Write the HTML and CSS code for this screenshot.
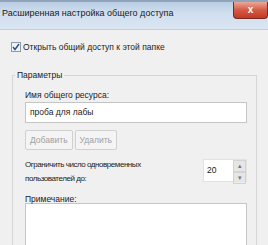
FILE: index.html
```html
<!DOCTYPE html>
<html lang="ru">
<head>
    <meta charset="UTF-8">
    <title>Расширенная настройка общего доступа</title>
    <link rel="stylesheet" href="styles.css">
</head>
<body>
    <div class="window">
        <div class="titlebar">
            <span class="title">Расширенная настройка общего доступа</span>
            <span class="close">x</span>
        </div>
        <div class="content">
            <label class="share">
                <span class="check">
                    <svg width="8" height="8" viewBox="0 0 8 8"><path d="M1 4 L3 6.5 L7 1" fill="none" stroke="#2d4f8a" stroke-width="1.4"/></svg>
                </span>
                Открыть общий доступ к этой папке
            </label>
            <fieldset class="params">
                <legend>Параметры</legend>
                <div class="field-label">Имя общего ресурса:</div>
                <div class="textbox">проба для лабы</div>
                <div class="buttons">
                    <span class="btn">Добавить</span>
                    <span class="btn">Удалить</span>
                </div>
                <div class="limit">
                    <div class="limit-text">Ограничить число одновременных<br>пользователей до:</div>
                    <div class="spin">
                        <span class="spin-value">20</span>
                        <span class="spin-arrows">
                            <span class="arrow">&#9652;</span>
                            <span class="arrow">&#9662;</span>
                        </span>
                    </div>
                </div>
                <div class="field-label note-label">Примечание:</div>
                <div class="textarea"></div>
            </fieldset>
        </div>
    </div>
</body>
</html>
```

FILE: styles.css
```css
html, body {
    margin: 0;
    padding: 0;
}

body {
    width: 268px;
    height: 245px;
    overflow: hidden;
    font-family: "Liberation Sans", Arial, sans-serif;
    font-size: 8.5px;
    color: #222;
    background: #f0f0f0;
}

.window {
    height: 245px;
    display: flex;
    flex-direction: column;
}

.titlebar {
    height: 30px;
    flex-shrink: 0;
    display: flex;
    justify-content: space-between;
    align-items: flex-start;
    background: linear-gradient(#b9cde3, #cfdeee 40%, #dbe6f2);
    border-top: 2px solid #8fa4bb;
    border-bottom: 1px solid #c8cdd4;
    box-sizing: border-box;
}

.title {
    margin: 6px 0 0 2px;
    font-size: 9px;
    color: #1a1a1a;
}

.close {
    width: 33px;
    height: 16px;
    background: linear-gradient(#e9a899, #d65a45 50%, #c23a25);
    border: 1px solid #7a2a20;
    border-top: none;
    border-radius: 0 0 4px 4px;
    color: #fff;
    font-weight: bold;
    font-size: 10px;
    text-align: center;
    line-height: 15px;
}

.content {
    flex: 1;
    min-height: 0;
    padding: 11px 10px 0 11px;
    background: #f0f0f0;
}

.share {
    display: flex;
    align-items: center;
    gap: 2px;
    height: 12px;
}

.check {
    width: 8px;
    height: 8px;
    border: 1px solid #8d9aa8;
    background: #eef3f9;
    display: flex;
}

.params {
    margin: 17px 0 0 1px;
    padding: 9px 9px 0 12px;
    border: 1px solid #d5d5d5;
    border-bottom: none;
    width: 245px;
    box-sizing: border-box;
    height: 200px;
}

.params legend {
    padding: 0 2px;
    margin-left: -10px;
}

.field-label {
    line-height: 12px;
}

.textbox {
    height: 21px;
    margin-top: 1px;
    border: 1px solid #c5c5c5;
    background: #fff;
    box-sizing: border-box;
    padding: 0 4px;
    line-height: 19px;
}

.buttons {
    display: flex;
    gap: 2px;
    margin-top: 7px;
}

.btn {
    height: 20px;
    box-sizing: border-box;
    border: 1px solid #d0d0d0;
    border-radius: 2px;
    background: #f4f4f4;
    color: #a0a0a0;
    padding: 0 4px;
    line-height: 18px;
}

.limit {
    display: flex;
    justify-content: space-between;
    align-items: flex-start;
    margin-top: 8px;
}

.limit-text {
    font-size: 8px;
    letter-spacing: -0.45px;
    line-height: 14px;
}

.spin {
    display: flex;
    width: 44px;
    height: 23px;
    box-sizing: border-box;
    border: 1px solid #e2e2e2;
    background: #fff;
    margin-top: 1px;
}

.spin-value {
    flex: 1;
    padding-left: 3px;
    line-height: 21px;
}

.spin-arrows {
    width: 13px;
    display: flex;
    flex-direction: column;
    background: #e6e6e6;
}

.arrow {
    flex: 1;
    font-size: 7px;
    color: #777;
    text-align: center;
    line-height: 10px;
    border: 1px solid #d3d3d3;
}

.note-label {
    margin-top: 9px;
    line-height: 9px;
}

.textarea {
    height: 60px;
    margin-top: -1px;
    border: 1px solid #c5c5c5;
    background: #fff;
}
```
